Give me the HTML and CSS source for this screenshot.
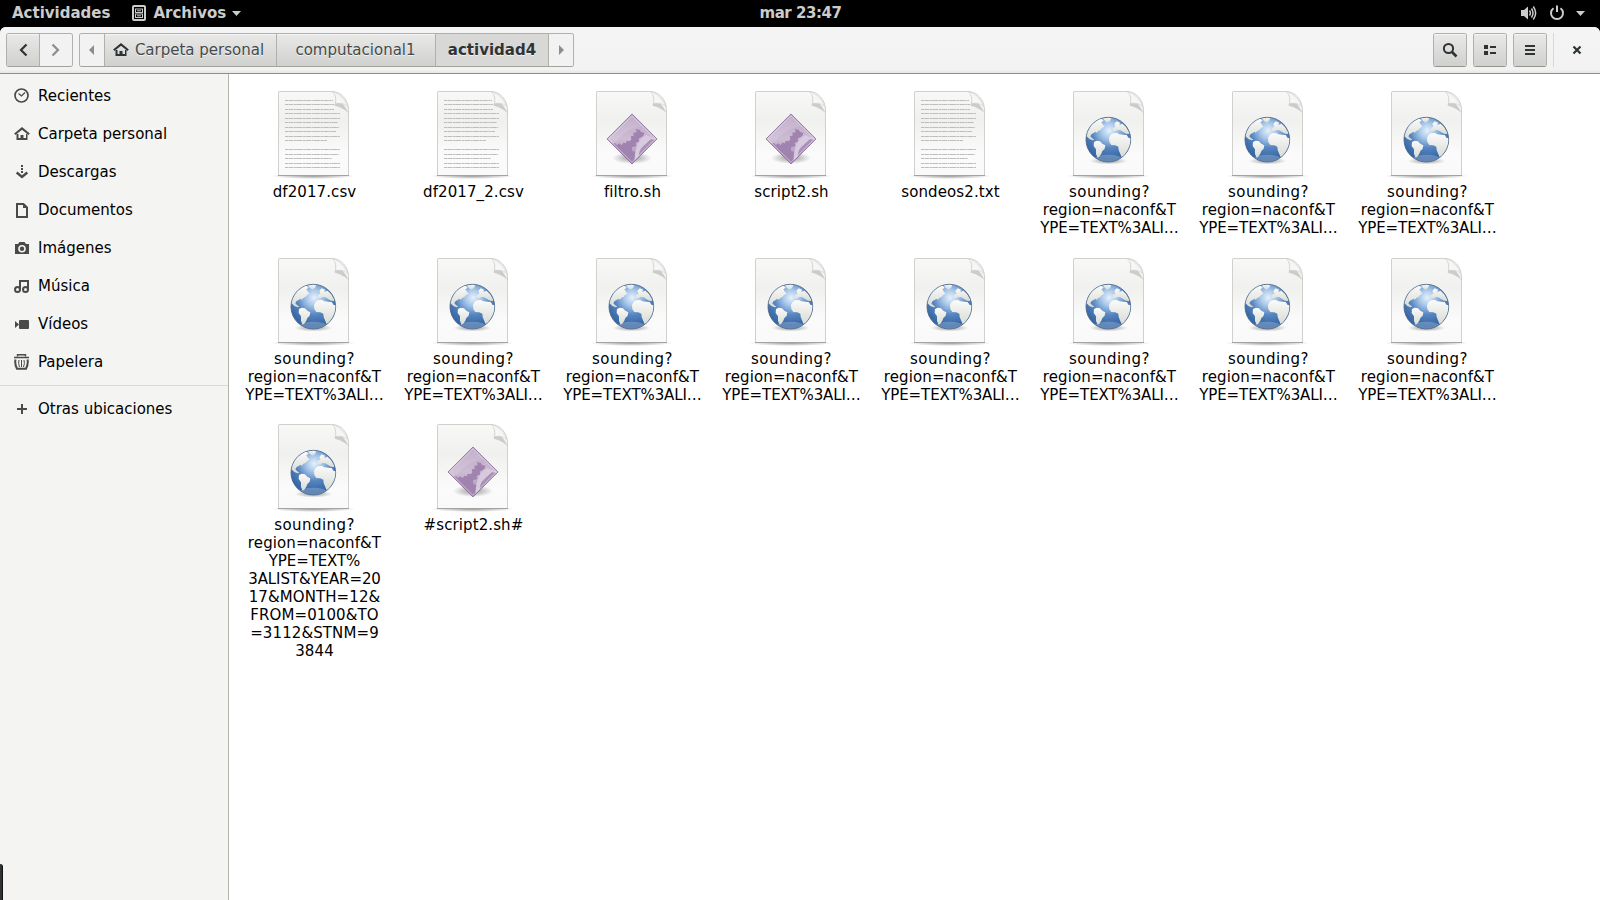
FILE: index.html
```html
<!DOCTYPE html>
<html lang="es">
<head>
<meta charset="utf-8">
<title>actividad4</title>
<link rel="stylesheet" href="styles.css">
</head>
<body>
<svg class="defs" aria-hidden="true">
  <defs>
    <linearGradient id="paper" x1="0" y1="0" x2="0" y2="1"><stop offset="0" stop-color="#f8f8f7"/><stop offset=".35" stop-color="#f0f0ee"/><stop offset=".75" stop-color="#fbfbfb"/><stop offset="1" stop-color="#f9f9f9"/></linearGradient>
    <linearGradient id="fold" x1="0" y1="1" x2="1" y2="0"><stop offset="0" stop-color="#fff"/><stop offset=".6" stop-color="#f4f4f3"/><stop offset="1" stop-color="#d2d2d0"/></linearGradient>
    <radialGradient id="sea" cx=".52" cy=".3" r=".62"><stop offset="0" stop-color="#e6f1fc"/><stop offset=".28" stop-color="#a9c8ea"/><stop offset=".62" stop-color="#5685c0"/><stop offset="1" stop-color="#3767a4"/></radialGradient>
    <linearGradient id="land" x1="0" y1="0" x2="0" y2="1"><stop offset="0" stop-color="#fbfbfa"/><stop offset="1" stop-color="#d8dbd4"/></linearGradient>
    <linearGradient id="violet" x1="0" y1="0" x2="0" y2="1"><stop offset="0" stop-color="#b9a3c3"/><stop offset=".5" stop-color="#cdbcd4"/><stop offset="1" stop-color="#a88bb5"/></linearGradient>
    <radialGradient id="shade"><stop offset="0" stop-color="#000" stop-opacity=".4"/><stop offset="1" stop-color="#000" stop-opacity="0"/></radialGradient>
    <clipPath id="disc"><circle cx="205" cy="163" r="66"/></clipPath>
    <clipPath id="rhomb"><path d="M126 89 198 161 126 233 54 161Z"/></clipPath>
  </defs>
  <symbol id="page" viewBox="0 0 96 96">
    <ellipse cx="47.500" cy="91" rx="42" ry="3" fill="url(#shade)"/>
    <path d="M13 6.500H66C75 6.500 82.500 15 82.500 25V90.500H12.500V7Z" fill="url(#paper)" stroke="#d0d0ce"/>
    <path d="M12 90.500H83" stroke="#a3a3a1"/>
    <path d="M68 9C73 15 79 20 82.500 28 77 23 72 21.500 68.500 20.500 70 17 70 13 68 9Z" fill="#555" opacity=".25"/>
    <path d="M66.500 7C70 10 70.500 15 69.500 18.500 74 17.500 79 18.500 81.500 21.500 79 14 74 8.500 66.500 7Z" fill="url(#fold)" stroke="#c8c8c6" stroke-width=".5"/>
  </symbol>
  <symbol id="text-file" viewBox="0 0 96 96">
    <use href="#page"/>
    <g fill="none" stroke="#bdbdbb" stroke-width="1" stroke-dasharray="3 .4 5 .5 2 .3 6 .5">
      <path d="M19 15.500H67M19 19.500H68M19 24.500H68M19 28.500H74M19 33.500H74M19 37.500H72M19 42.500H73M19 46.500H70M19 51.500H74M19 55.500H61M19 64.500H74M19 69.500H73M19 73.500H66M19 78.500H74M19 82.500H74"/>
    </g>
  </symbol>
  <symbol id="web-file" viewBox="0 0 96 96">
    <use href="#page"/>
    <ellipse cx="47.500" cy="76" rx="19" ry="3.500" fill="url(#shade)"/>
    <g transform="translate(-21 .3) scale(.33333)">
      <circle cx="205" cy="163" r="67" fill="url(#sea)" stroke="#4a6488" stroke-width="2.500"/>
      <g clip-path="url(#disc)">
        <g fill="url(#land)">
          <path d="M138 152 142 132 154 115 168 105 184 99 191 106 184 111 189 118 193 124 186 128 182 133 175 137 170 142 166 139 161 143 155 146 151 153 156 158 163 163 158 165 148 161 142 155Z"/>
          <path d="M186 96 202 93 214 99 210 107 202 112 195 107Z"/>
          <path d="M162 170 170 166 180 168 187 175 196 180 194 190 187 197 184 205 179 213 173 217 168 206 168 192 161 182Z"/>
          <path d="M217 137 219 128 226 124 223 116 230 108 240 112 238 119 247 115 258 125 267 140 268 146 258 145 249 140 241 135 232 134 226 138Z"/>
          <path d="M207 158 211 150 219 144 231 143 238 147 250 148 260 149 266 158 274 158 272 180 264 195 254 212 245 216 240 204 236 194 235 184 226 180 214 179 208 170Z"/>
        </g>
        <ellipse cx="205" cy="222" rx="42" ry="14" fill="#fff" opacity=".22"/>
      </g>
    </g>
  </symbol>
  <symbol id="script-file" viewBox="0 0 96 96">
    <use href="#page"/>
    <ellipse cx="48" cy="73" rx="20" ry="6" fill="url(#shade)"/>
    <g transform="translate(6 .3) scale(.33333)">
      <path d="M126 86 201 161 126 236 51 161Z" fill="url(#violet)" stroke="#8a6b99" stroke-width="2.500"/>
      <g clip-path="url(#rhomb)">
        <path d="M66 175 75 172 80 179 88 174 95 180 100 172 108 174 110 166 119 168 124 162 122 153 131 151 130 142 140 141 138 131 150 134 153 140 163 142 160 152 146 160 148 168 137 173 139 182 126 186 126 196 136 200 128 240Z" fill="#a084af"/>
        <path d="M135 228C133 195 142 165 168 150L200 161 180 180C158 182 150 200 150 222Z" fill="#d8cade"/>
        <path d="M158 184 182 162 198 163 146 216C147 200 150 191 158 184Z" fill="#ab90b8"/>
        <path d="M54 161 126 89 160 123C130 125 90 145 72 178Z" fill="#fff" opacity=".12"/>
      </g>
      <path d="M126 91 196 161 126 231 56 161Z" fill="none" stroke="#eee6f2" stroke-width="2.500" opacity=".6"/>
    </g>
  </symbol>
  <symbol id="home" viewBox="0 0 16 16">
    <path d="M.8 8.300 8 2.400 15.200 8.300" fill="none" stroke="currentColor" stroke-width="2"/>
    <path d="M2.500 8V14H13.500V8H12V12H9.500V9H6.500V12H4.500V8Z" fill="currentColor"/>
  </symbol>
</svg>

<header class="topbar">
  <div class="topbar-left">
    <span>Actividades</span>
    <span class="app-menu">
      <svg width="14" height="16" viewBox="0 0 14 16" fill="none" stroke="currentColor"><rect x="1" y="1" width="12" height="14" rx="1" stroke-width="2"/><rect x="3.500" y="4" width="7" height="3.500"/><rect x="3.500" y="9" width="7" height="3.500"/><path d="M5 5.800H9M5 10.800H9"/></svg>
      <span>Archivos</span>
      <svg width="9" height="5" viewBox="0 0 9 5"><path d="M0 0H9L4.500 5Z" fill="currentColor"/></svg>
    </span>
  </div>
  <span class="clock">mar 23:47</span>
  <div class="topbar-right">
    <svg width="16" height="16" viewBox="0 0 16 16" fill="none" stroke="currentColor" stroke-width="1.500"><path d="M0 5H3L7 1.500V14.500L3 11H0Z" fill="currentColor" stroke="none"/><path d="M8.500 5.500Q10.300 8 8.500 10.500M10.500 3.500Q13.500 8 10.500 12.500M12.300 1.500Q17 8 12.300 14.500"/></svg>
    <svg width="16" height="16" viewBox="0 0 16 16" fill="none" stroke="currentColor" stroke-width="2"><path d="M4.500 3.200A6 6 0 1 0 11.500 3.200M8 .5V7"/></svg>
    <svg width="9" height="5" viewBox="0 0 9 5"><path d="M0 0H9L4.500 5Z" fill="currentColor"/></svg>
  </div>
</header>

<div class="window">
  <div class="headerbar">
    <div class="group nav">
      <span class="btn"><svg width="16" height="16" viewBox="0 0 16 16"><path d="M11.500 2.500 6 8 11.500 13.500" fill="none" stroke="currentColor" stroke-width="2.200"/></svg></span>
      <span class="btn off"><svg width="16" height="16" viewBox="0 0 16 16"><path d="M4.500 2.500 10 8 4.500 13.500" fill="none" stroke="currentColor" stroke-width="2.200"/></svg></span>
    </div>
    <div class="group path">
      <span class="btn off arrow first"><svg width="5" height="10" viewBox="0 0 5 10"><path d="M5 0V10L0 5Z" fill="currentColor"/></svg></span>
      <span class="btn crumb-home"><svg width="16" height="16"><use href="#home"/></svg>Carpeta personal</span>
      <span class="btn crumb">computacional1</span>
      <span class="btn current">actividad4</span>
      <span class="btn off arrow"><svg width="5" height="10" viewBox="0 0 5 10"><path d="M0 0V10L5 5Z" fill="currentColor"/></svg></span>
    </div>
    <div class="tools">
      <span class="group"><span class="btn"><svg width="16" height="16" viewBox="0 0 16 16" fill="none" stroke="currentColor"><circle cx="6.500" cy="6.500" r="4.600" stroke-width="2"/><path d="M10 10 14.500 14.500" stroke-width="2.600"/></svg></span></span>
      <span class="group"><span class="btn"><svg width="16" height="16" viewBox="0 0 16 16" fill="currentColor"><path d="M2 3H6V7H2ZM2 9H6V13H2ZM8 4H14V6H8ZM8 10H14V12H8Z"/></svg></span></span>
      <span class="group"><span class="btn"><svg width="16" height="16" viewBox="0 0 16 16" fill="currentColor"><path d="M3 3H13V5H3ZM3 7H13V9H3ZM3 11H13V13H3Z"/></svg></span></span>
      <span class="close"><svg width="16" height="16" viewBox="0 0 16 16"><path d="M4.500 4.500 11.500 11.500M11.500 4.500 4.500 11.500" stroke="currentColor" stroke-width="2.200"/></svg></span>
    </div>
  </div>

  <div class="content">
    <nav class="sidebar">
      <div class="place"><svg width="16" height="16" viewBox="0 0 16 16" fill="none" stroke="currentColor"><circle cx="7.500" cy="7.500" r="6.500" stroke-width="1.700"/><path d="M4.500 5.500 7.500 8 11 4.500" stroke-width="1.200"/></svg><span>Recientes</span></div>
      <div class="place"><svg width="16" height="16"><use href="#home"/></svg><span>Carpeta personal</span></div>
      <div class="place"><svg width="16" height="16" viewBox="0 0 16 16" fill="none" stroke="currentColor" stroke-width="2"><path d="M8 1V3M8 4V6M8 7V9"/><path d="M2.700 8.500 8 13 13.300 8.500" stroke-width="2.400"/></svg><span>Descargas</span></div>
      <div class="place"><svg width="16" height="16" viewBox="0 0 16 16"><path d="M3 2H9.500L13 5.500V15H3Z" fill="none" stroke="currentColor" stroke-width="2"/><path d="M9 2V6H13Z" fill="currentColor"/></svg><span>Documentos</span></div>
      <div class="place"><svg width="16" height="16" viewBox="0 0 16 16"><path d="M1 4H4L5.500 2H10.500L12 4H15V14H1Z" fill="currentColor"/><circle cx="8" cy="8.800" r="3" fill="none" stroke="#f4f4f2" stroke-width="1.600"/></svg><span>Imágenes</span></div>
      <div class="place"><svg width="16" height="16" viewBox="0 0 16 16" fill="none" stroke="currentColor" stroke-width="2"><circle cx="3.500" cy="11.500" r="2.500"/><circle cx="11.500" cy="11.500" r="2.500"/><path d="M6 11.500V3H14V11.500"/></svg><span>Música</span></div>
      <div class="place"><svg width="16" height="16" viewBox="0 0 16 16" fill="currentColor"><path d="M1 5 5 8.500 1 12Z"/><rect x="5" y="4" width="10" height="9" rx="1"/></svg><span>Vídeos</span></div>
      <div class="place"><svg width="16" height="16" viewBox="0 0 16 16" fill="none" stroke="currentColor"><path d="M0 3.500H15" stroke-width="1.500"/><path d="M3.500 2.500V.8H11.500V2.500" stroke-width="1.400"/><path d="M1.500 5.500Q.5 10 3 14.800H12Q14.500 10 13.500 5.500" stroke-width="2"/><path d="M5 6Q4 9.500 5.500 13M7.500 6V13M10 6Q11 9.500 9.500 13"/></svg><span>Papelera</span></div>
      <hr class="sep">
      <div class="place"><svg width="16" height="16" viewBox="0 0 16 16"><path d="M3 8H13M8 3V13" stroke="currentColor" stroke-width="2"/></svg><span>Otras ubicaciones</span></div>
    </nav>

    <main class="files">
      <div class="file"><svg class="thumb"><use href="#text-file"/></svg><span class="name">df2017.csv</span></div>
      <div class="file"><svg class="thumb"><use href="#text-file"/></svg><span class="name">df2017_2.csv</span></div>
      <div class="file"><svg class="thumb"><use href="#script-file"/></svg><span class="name">filtro.sh</span></div>
      <div class="file"><svg class="thumb"><use href="#script-file"/></svg><span class="name">script2.sh</span></div>
      <div class="file"><svg class="thumb"><use href="#text-file"/></svg><span class="name">sondeos2.txt</span></div>
      <div class="file"><svg class="thumb"><use href="#web-file"/></svg><span class="name"><span class="wide">sounding?</span><br>region=naconf&amp;T<br><span class="tight">YPE=TEXT%3ALI…</span></span></div>
      <div class="file"><svg class="thumb"><use href="#web-file"/></svg><span class="name"><span class="wide">sounding?</span><br>region=naconf&amp;T<br><span class="tight">YPE=TEXT%3ALI…</span></span></div>
      <div class="file"><svg class="thumb"><use href="#web-file"/></svg><span class="name"><span class="wide">sounding?</span><br>region=naconf&amp;T<br><span class="tight">YPE=TEXT%3ALI…</span></span></div>
      <div class="file"><svg class="thumb"><use href="#web-file"/></svg><span class="name"><span class="wide">sounding?</span><br>region=naconf&amp;T<br><span class="tight">YPE=TEXT%3ALI…</span></span></div>
      <div class="file"><svg class="thumb"><use href="#web-file"/></svg><span class="name"><span class="wide">sounding?</span><br>region=naconf&amp;T<br><span class="tight">YPE=TEXT%3ALI…</span></span></div>
      <div class="file"><svg class="thumb"><use href="#web-file"/></svg><span class="name"><span class="wide">sounding?</span><br>region=naconf&amp;T<br><span class="tight">YPE=TEXT%3ALI…</span></span></div>
      <div class="file"><svg class="thumb"><use href="#web-file"/></svg><span class="name"><span class="wide">sounding?</span><br>region=naconf&amp;T<br><span class="tight">YPE=TEXT%3ALI…</span></span></div>
      <div class="file"><svg class="thumb"><use href="#web-file"/></svg><span class="name"><span class="wide">sounding?</span><br>region=naconf&amp;T<br><span class="tight">YPE=TEXT%3ALI…</span></span></div>
      <div class="file"><svg class="thumb"><use href="#web-file"/></svg><span class="name"><span class="wide">sounding?</span><br>region=naconf&amp;T<br><span class="tight">YPE=TEXT%3ALI…</span></span></div>
      <div class="file"><svg class="thumb"><use href="#web-file"/></svg><span class="name"><span class="wide">sounding?</span><br>region=naconf&amp;T<br><span class="tight">YPE=TEXT%3ALI…</span></span></div>
      <div class="file"><svg class="thumb"><use href="#web-file"/></svg><span class="name"><span class="wide">sounding?</span><br>region=naconf&amp;T<br><span class="tight">YPE=TEXT%3ALI…</span></span></div>
      <div class="file"><svg class="thumb"><use href="#web-file"/></svg><span class="name"><span class="wide">sounding?</span><br>region=naconf&amp;T<br><span class="tight">YPE=TEXT%</span><br><span class="tight">3ALIST&amp;YEAR=20</span><br>17&amp;MONTH=12&amp;<br>FROM=0100&amp;TO<br>=3112&amp;STNM=9<br>3844</span></div>
      <div class="file"><svg class="thumb"><use href="#script-file"/></svg><span class="name">#script2.sh#</span></div>
    </main>
  </div>
</div>
<div class="tray-handle"></div>
</body>
</html>
```

FILE: styles.css
```css
* { box-sizing: border-box; }
body {
  margin: 0;
  height: 900px;
  overflow: hidden;
  display: flex;
  flex-direction: column;
  background: #000;
  font: 15px/18px "DejaVu Sans", sans-serif;
  color: #000;
}
svg { display: block; flex: none; }
.defs { position: absolute; width: 0; height: 0; }

.topbar {
  height: 27px;
  flex: none;
  display: grid;
  grid-template-columns: 1fr auto 1fr;
  align-items: center;
  padding: 0 15px 1px 12px;
  color: #ccc;
  font-weight: bold;
}
.topbar-left, .topbar-right, .app-menu { display: flex; align-items: center; }
.topbar-left { gap: 22px; }
.app-menu { gap: 7px; }
.app-menu > :last-child { margin-left: -1px; }
.topbar-right { justify-content: flex-end; gap: 12px; }
.topbar-right > :last-child { margin-left: -1px; }
.clock { letter-spacing: -.45px; padding-left: 4px; }

.window {
  flex: 1;
  min-height: 0;
  display: flex;
  flex-direction: column;
  background: #fff;
  border-radius: 6px 6px 0 0;
  overflow: hidden;
}
.headerbar {
  height: 47px;
  flex: none;
  display: flex;
  align-items: center;
  padding: 0 6px 1px;
  background: linear-gradient(#f4f4f4, #f2f2f2 93%, #e6e6e5);
  border-bottom: 1px solid #8f8f88;
  color: #2e3436;
}
.group {
  height: 34px;
  display: flex;
  border: 1px solid #b0b0ac;
  border-bottom-color: #94948c;
  border-radius: 3px;
  overflow: hidden;
}
.btn {
  min-width: 32px;
  display: flex;
  align-items: center;
  justify-content: center;
  background: linear-gradient(#e9e9e8, #d0d0ce);
  box-shadow: inset 0 1px #f5f5f5;
  text-shadow: 0 1px rgba(255, 255, 255, .7);
}
.btn + .btn { border-left: 1px solid #b0b0ac; }
.nav, .path { border-bottom-color: #a3a39d; }
.nav { width: 67px; margin-right: 6px; }
.nav .btn { flex: 1; }
.btn.off { background: #f2f2f2; color: #8b8e8f; box-shadow: none; }
.btn.arrow { width: 25px; min-width: 0; }
.btn.first { width: 24px; padding-right: 1px; }
.crumb-home { width: 172px; gap: 6px; padding-right: 4px; color: #444a4c; }
.crumb-home svg { color: #2e3436; }
.crumb { width: 159px; padding-right: 1px; color: #444a4c; }
.current { width: 113px; background: #d8d8d6; box-shadow: none; font-weight: bold; }
.tools { margin-left: auto; display: flex; gap: 6px; }
.close {
  width: 41px;
  display: flex;
  align-items: center;
  justify-content: center;
  border-left: 1px solid #d8d8d6;
  padding-left: 6px;
}

.content { flex: 1; min-height: 0; display: flex; }
.sidebar {
  width: 229px;
  flex: none;
  padding-top: 3px;
  background: #f4f4f2;
  border-right: 1px solid #b4b4b0;
}
.place {
  height: 38px;
  display: flex;
  align-items: center;
  gap: 8px;
  padding-left: 14px;
}
.place svg { color: #4a4a48; }
.sep { height: 1px; margin: 4px 0; border: 0; background: #dadad8; }

.files {
  flex: 1;
  display: grid;
  grid-template-columns: repeat(8, 159px);
  grid-template-rows: 167px 166px auto;
  align-content: start;
  padding: 11px 0 0 6px;
}
.file {
  display: flex;
  flex-direction: column;
  align-items: center;
  text-align: center;
  white-space: nowrap;
}
.thumb { width: 96px; height: 96px; margin-right: 1px; }
.name { margin-top: 2px; letter-spacing: .1px; }
.wide { letter-spacing: .45px; }
.tight { letter-spacing: -.1px; }

.tray-handle {
  position: absolute;
  left: 0;
  top: 864px;
  width: 3px;
  height: 36px;
  background: #2e3436;
  border-right: 1px solid #111;
  border-radius: 0 3px 0 0;
}
```
